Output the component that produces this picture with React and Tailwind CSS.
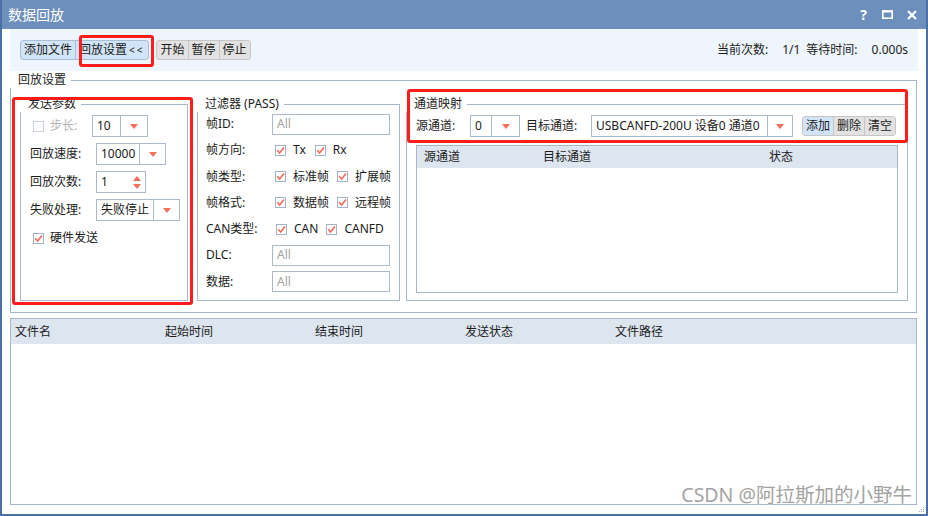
import React from 'react';

// small red down / up arrow used by the combo boxes
function Tri({ up }) {
  return (
    <svg width="8" height="5" viewBox="0 0 8 5">
      <polygon points={up ? '0,5 8,5 4,0' : '0,0 8,0 4,5'} fill="#f26f5f" />
    </svg>
  );
}

function Check({ checked, disabled }) {
  return (
    <span
      className={
        disabled
          ? 'w-[11px] h-[11px] shrink-0 border border-[#c9d1db] bg-white flex items-center justify-center'
          : 'w-[11px] h-[11px] shrink-0 border border-[#a3b2c5] bg-white flex items-center justify-center'
      }
    >
      {checked && (
        <svg width="9" height="9" viewBox="0 0 9 9">
          <path d="M1.2 4.2 L3.6 7 L8 1.4" stroke="#ef6a5a" strokeWidth="1.6" fill="none" />
        </svg>
      )}
    </span>
  );
}

function Select({ value, boxClass, textClass }) {
  return (
    <div className={`h-[22px] flex border border-[#abb9cb] bg-white shrink-0 ${boxClass}`}>
      <span className={`pl-[4px] flex items-center whitespace-nowrap overflow-hidden border-r border-[#abb9cb] ${textClass}`}>{value}</span>
      <span className="flex-1 flex items-center justify-center">
        <Tri />
      </span>
    </div>
  );
}

function Input() {
  return (
    <div className="w-[118px] h-[21px] border border-[#abb9cb] bg-white pl-[4px] flex items-center text-[#a2a2a2]">All</div>
  );
}

function Group({ title, className, bodyClass, children }) {
  return (
    <div className={`flex flex-col ${className}`}>
      <div className="flex items-center h-[16px] shrink-0">
        <span className="pl-[8px] pr-[5px] leading-[16px] whitespace-nowrap">{title}</span>
        <div className="flex-1 h-[8px] self-end border-t border-r border-[#a7b6c8]" />
      </div>
      <div className={`flex-1 border-l border-r border-b border-[#a7b6c8] ${bodyClass}`}>{children}</div>
    </div>
  );
}

function CheckItem({ label, gap }) {
  return (
    <span className={`flex items-center ${gap}`}>
      <Check checked />
      <span className="ml-[7px]">{label}</span>
    </span>
  );
}

export default function App() {
  return (
    <div className="relative w-[928px] h-[516px] bg-white border-l-2 border-r-2 border-b-2 border-[#4b70a5] flex flex-col text-[12px] leading-[16px] text-[#1b1b1b] font-['Noto_Sans','Noto_Sans_CJK_SC',sans-serif] overflow-hidden">
      {/* title bar */}
      <div className="h-[29px] shrink-0 bg-[#6c8fbb] flex items-center text-white -mx-[2px] px-[8px]">
        <span className="text-[14px] leading-[18px]">数据回放</span>
        <span className="flex-1" />
        <span className="font-bold text-[14px] mr-[15px]">?</span>
        <svg width="11" height="9" viewBox="0 0 11 9" className="mr-[14px]">
          <rect x="0.8" y="1" width="9.4" height="7.2" stroke="white" strokeWidth="1.6" fill="none" />
          <line x1="0" y1="1.5" x2="11" y2="1.5" stroke="white" strokeWidth="2" />
        </svg>
        <svg width="10" height="10" viewBox="0 0 10 10" className="mr-[3px]">
          <path d="M1 1 L9 9 M9 1 L1 9" stroke="white" strokeWidth="2.2" />
        </svg>
      </div>

      {/* toolbar */}
      <div className="h-[42px] shrink-0 ml-[8px] mr-[8px] bg-[#eef5fc] flex items-center pl-[10px] pr-[10px]">
        <div className="flex h-[20px] rounded-[3px] border border-[#a9bfd9] bg-[#d2e4f7] overflow-hidden">
          <span className="px-[3px] flex items-center">添加文件</span>
          <span className="pl-[3px] pr-[4px] flex items-center border-l border-[#a9bfd9]">
            回放设置<span className="ml-[2px] text-[10px] tracking-[2px]">&lt;&lt;</span>
          </span>
        </div>
        <div className="flex h-[20px] ml-[7px] rounded-[3px] border border-[#c6c6c6] bg-[#e2e2e2] overflow-hidden">
          <span className="px-[3px] flex items-center">开始</span>
          <span className="px-[3px] flex items-center border-l border-[#c6c6c6]">暂停</span>
          <span className="px-[3px] flex items-center border-l border-[#c6c6c6]">停止</span>
        </div>
        <span className="flex-1" />
        <span>当前次数:</span>
        <span className="ml-[14px]">1/1</span>
        <span className="ml-[6px]">等待时间:</span>
        <span className="ml-[14px]">0.000s</span>
      </div>

      {/* 回放设置 */}
      <Group title="回放设置" className="mt-[1px] ml-[8px] mr-[9px] h-[241px] shrink-0" bodyClass="flex pt-[8px] pl-[9px] pr-[8px] pb-[11px]">
        <Group title="发送参数" className="w-[168px]" bodyClass="flex flex-col gap-[6px] pt-[3px]">
          <div className="flex items-center h-[22px]">
            <span className="ml-[12px]"><Check disabled /></span>
            <span className="ml-[6px] w-[42px] text-[#b2b2b2]">步长:</span>
            <Select value="10" boxClass="w-[56px]" textClass="w-[28px]" />
          </div>
          <div className="flex items-center h-[22px]">
            <span className="ml-[9px] w-[66px]">回放速度:</span>
            <Select value="10000" boxClass="w-[70px]" textClass="w-[43px]" />
          </div>
          <div className="flex items-center h-[22px]">
            <span className="ml-[9px] w-[66px]">回放次数:</span>
            <div className="w-[50px] h-[22px] border border-[#abb9cb] flex items-center">
              <span className="pl-[4px] flex-1">1</span>
              <span className="flex flex-col gap-[3px] pr-[4px]">
                <Tri up />
                <Tri />
              </span>
            </div>
          </div>
          <div className="flex items-center h-[22px]">
            <span className="ml-[9px] w-[66px]">失败处理:</span>
            <Select value="失败停止" boxClass="w-[84px]" textClass="w-[57px]" />
          </div>
          <div className="flex items-center h-[22px]">
            <span className="ml-[12px]"><Check checked /></span>
            <span className="ml-[6px]">硬件发送</span>
          </div>
        </Group>

        <Group title="过滤器 (PASS)" className="w-[203px] ml-[9px]" bodyClass="flex flex-col gap-[6.3px] pt-[2px] pl-[8px]">
          <div className="flex items-center h-[20px]">
            <span className="w-[66px]">帧ID:</span>
            <Input />
          </div>
          <div className="flex items-center h-[20px]">
            <span className="w-[69px]">帧方向:</span>
            <CheckItem label="Tx" gap="mr-[9px]" />
            <CheckItem label="Rx" />
          </div>
          <div className="flex items-center h-[20px]">
            <span className="w-[69px]">帧类型:</span>
            <CheckItem label="标准帧" gap="mr-[8px]" />
            <CheckItem label="扩展帧" />
          </div>
          <div className="flex items-center h-[20px]">
            <span className="w-[69px]">帧格式:</span>
            <CheckItem label="数据帧" gap="mr-[8px]" />
            <CheckItem label="远程帧" />
          </div>
          <div className="flex items-center h-[20px]">
            <span className="w-[70px]">CAN类型:</span>
            <CheckItem label="CAN" gap="mr-[8px]" />
            <CheckItem label="CANFD" />
          </div>
          <div className="flex items-center h-[20px]">
            <span className="w-[66px]">DLC:</span>
            <Input />
          </div>
          <div className="flex items-center h-[20px]">
            <span className="w-[66px]">数据:</span>
            <Input />
          </div>
        </Group>

        <Group title="通道映射" className="w-[502px] ml-[6px]" bodyClass="flex flex-col pt-[3px] pl-[9px] pr-[9px] pb-[7px]">
          <div className="flex items-center h-[22px] shrink-0">
            <span className="w-[54px]">源通道:</span>
            <Select value="0" boxClass="w-[50px]" textClass="w-[21px]" />
            <span className="ml-[6px] w-[65px]">目标通道:</span>
            <Select value="USBCANFD-200U 设备0 通道0" boxClass="w-[202px]" textClass="w-[176px]" />
            <div className="flex h-[20px] ml-[9px] rounded-[3px] border border-[#c6c6c6] overflow-hidden">
              <span className="px-[3px] flex items-center bg-[#d2e4f7]">添加</span>
              <span className="px-[3px] flex items-center bg-[#e2e2e2] border-l border-[#c6c6c6]">删除</span>
              <span className="px-[3px] flex items-center bg-[#e2e2e2] border-l border-[#c6c6c6]">清空</span>
            </div>
          </div>
          <div className="flex-1 mt-[8px] border border-[#a7b6c8] flex flex-col">
            <div className="h-[22px] bg-[#dde5ef] flex items-center pl-[7px]">
              <span className="w-[119px]">源通道</span>
              <span className="w-[226px]">目标通道</span>
              <span>状态</span>
            </div>
          </div>
        </Group>
      </Group>

      {/* file list */}
      <div className="flex-1 mt-[5px] mb-[9px] ml-[8px] mr-[9px] border border-[#a7b6c8] flex flex-col">
        <div className="h-[25px] bg-[#dde5ef] flex items-center pl-[4px]">
          <span className="w-[150px]">文件名</span>
          <span className="w-[150px]">起始时间</span>
          <span className="w-[150px]">结束时间</span>
          <span className="w-[150px]">发送状态</span>
          <span className="w-[150px]">文件路径</span>
        </div>
      </div>

      {/* annotation boxes */}
      <div className="absolute left-[77px] top-[35px] w-[75px] h-[32px] border-[3px] border-[#ff1c1c] rounded-[3px]" />
      <div className="absolute left-[10px] top-[97px] w-[181px] h-[208px] border-[3px] border-[#ff1c1c] rounded-[3px]" />
      <div className="absolute left-[405px] top-[89px] w-[501px] h-[54px] border-[3px] border-[#ff1c1c] rounded-[3px]" />

      {/* watermark */}
      <span className="absolute right-[14px] bottom-[8px] text-[19.5px] leading-[22px] text-[#a3a3a3] [text-shadow:0_0_1px_#fff,0_0_2px_#fff]">
        CSDN @阿拉斯加的小野牛
      </span>
      <svg width="7" height="7" viewBox="0 0 7 7" className="absolute right-[1px] bottom-[1px]">
        <rect x="5" y="1" width="1" height="1" fill="#9aa8ba" />
        <rect x="3" y="3" width="1" height="1" fill="#9aa8ba" />
        <rect x="5" y="3" width="1" height="1" fill="#9aa8ba" />
        <rect x="1" y="5" width="1" height="1" fill="#9aa8ba" />
        <rect x="3" y="5" width="1" height="1" fill="#9aa8ba" />
        <rect x="5" y="5" width="1" height="1" fill="#9aa8ba" />
      </svg>
    </div>
  );
}
